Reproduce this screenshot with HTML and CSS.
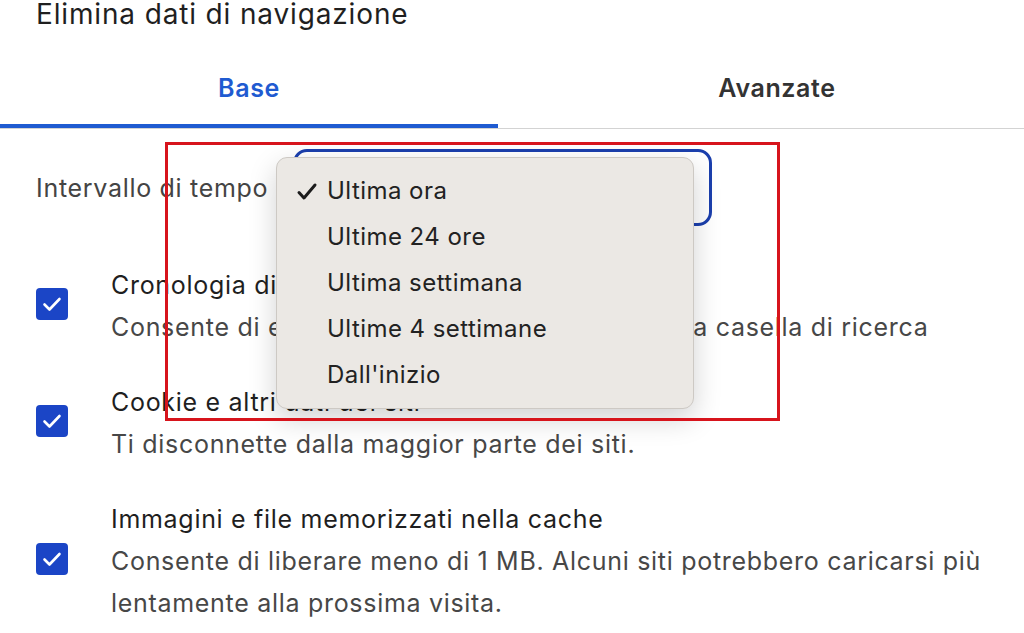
FILE: index.html
```html
<!DOCTYPE html>
<html lang="it">
<head>
  <meta charset="UTF-8">
  <meta name="viewport" content="width=device-width, initial-scale=1.0">
  <title>Elimina dati di navigazione</title>
  <link rel="stylesheet" href="styles.css">
</head>
<body>
<div class="dialog">
  <h1 class="dialog-title">Elimina dati di navigazione</h1>

  <div class="tabs">
    <div class="tab tab-active">Base</div>
    <div class="tab">Avanzate</div>
  </div>

  <div class="range-row">
    <span class="range-label">Intervallo di tempo</span>
    <div class="range-select"></div>
  </div>

  <div class="data-list">
    <div class="data-item">
      <span class="checkbox"><svg viewBox="0 0 32 32" width="32" height="32"><path d="M8.5 16.5l5 5 10-10.5" fill="none" stroke="#fff" stroke-width="2.6" stroke-linecap="round" stroke-linejoin="round"/></svg></span>
      <div class="data-text">
        <div class="data-name">Cronologia di navigazione</div>
        <div class="data-desc">Consente di eliminare la cronologia, anche nella casella di ricerca</div>
      </div>
    </div>
    <div class="data-item">
      <span class="checkbox"><svg viewBox="0 0 32 32" width="32" height="32"><path d="M8.5 16.5l5 5 10-10.5" fill="none" stroke="#fff" stroke-width="2.6" stroke-linecap="round" stroke-linejoin="round"/></svg></span>
      <div class="data-text">
        <div class="data-name">Cookie e altri dati dei siti</div>
        <div class="data-desc">Ti disconnette dalla maggior parte dei siti.</div>
      </div>
    </div>
    <div class="data-item">
      <span class="checkbox"><svg viewBox="0 0 32 32" width="32" height="32"><path d="M8.5 16.5l5 5 10-10.5" fill="none" stroke="#fff" stroke-width="2.6" stroke-linecap="round" stroke-linejoin="round"/></svg></span>
      <div class="data-text">
        <div class="data-name">Immagini e file memorizzati nella cache</div>
        <div class="data-desc">Consente di liberare meno di 1 MB. Alcuni siti potrebbero caricarsi più lentamente alla prossima visita.</div>
      </div>
    </div>
  </div>

  <!-- open popup of the time range select -->
  <ul class="range-menu">
    <li class="menu-item"><svg class="menu-check" viewBox="0 0 22 22" width="22" height="22"><path d="M3 11.5l5 5.5 11-13" fill="none" stroke="#1c1c1c" stroke-width="3" stroke-linecap="round" stroke-linejoin="round"/></svg>Ultima ora</li>
    <li class="menu-item">Ultime 24 ore</li>
    <li class="menu-item">Ultima settimana</li>
    <li class="menu-item">Ultime 4 settimane</li>
    <li class="menu-item">Dall'inizio</li>
  </ul>

  <!-- red highlight box -->
  <div class="highlight"></div>
</div>
</body>
</html>
```

FILE: styles.css
```css
html, body {
  margin: 0;
  background: #fff;
  overflow: hidden;
}
body {
  font-family: Inter, "Noto Sans", sans-serif;
  color: #1f1f1f;
}
.dialog {
  position: relative;
  width: 1024px;
  height: 633px;
  padding-top: 1px;
  box-sizing: border-box;
}
.dialog-title {
  margin: -1px 0 0;
  padding-left: 36px;
  font-size: 28px;
  font-weight: 400;
  line-height: 28px;
  letter-spacing: 0.85px;
  color: #1f1f1f;
}

/* tabs */
.tabs {
  display: grid;
  grid-template-columns: 498px 558px;
  margin-top: 42px;
  width: 1056px;
  border-bottom: 1px solid #d3d3d3;
}
.tab {
  text-align: center;
  font-size: 25px;
  font-weight: 600;
  letter-spacing: 0.6px;
  line-height: 36px;
  padding-bottom: 22px;
  color: #333;
}
.tab-active {
  color: #1f5bd1;
  box-shadow: inset 0 -4px 0 #1f5bd1;
  border-radius: 0 2px 0 0;
}

/* time range */
.range-row {
  display: flex;
  align-items: center;
  margin-top: 20px;
  padding-left: 36px;
}
.range-label {
  width: 257px;
  font-size: 25px;
  letter-spacing: 0.7px;
  color: #444;
}
.range-select {
  width: 413px;
  height: 71px;
  border: 3px solid #1b3fad;
  border-radius: 14px;
  background: #fff;
}

/* checkbox list */
.data-list {
  display: flex;
  flex-direction: column;
  gap: 33px;
  margin-top: 38px;
  padding-left: 36px;
}
.data-item {
  display: flex;
  align-items: center;
}
.checkbox {
  flex: none;
  display: flex;
  align-items: center;
  justify-content: center;
  width: 32px;
  height: 32px;
  margin-right: 43px;
  margin-top: -4px;
  border-radius: 4px;
  background: #1b45c6;
}
.data-text {
  width: 890px;
  font-size: 25px;
  letter-spacing: 0.7px;
  line-height: 42px;
}
.data-name {
  color: #1f1f1f;
}
.data-desc {
  color: #474747;
}

/* dropdown popup */
.range-menu {
  position: absolute;
  left: 276px;
  top: 157px;
  width: 416px;
  margin: 0;
  padding: 10px 0;
  list-style: none;
  background: #ebe8e4;
  border: 1px solid #cdc9c4;
  border-radius: 11px;
  box-shadow: 0 10px 28px rgba(0, 0, 0, 0.18);
}
.menu-item {
  position: relative;
  padding-left: 50px;
  font-size: 24px;
  letter-spacing: 0.45px;
  line-height: 46px;
  color: #222;
}
.menu-check {
  position: absolute;
  left: 19px;
  top: 13px;
}

/* annotation */
.highlight {
  position: absolute;
  left: 165px;
  top: 142px;
  width: 609px;
  height: 273px;
  border: 3px solid #d7141c;
}
```
